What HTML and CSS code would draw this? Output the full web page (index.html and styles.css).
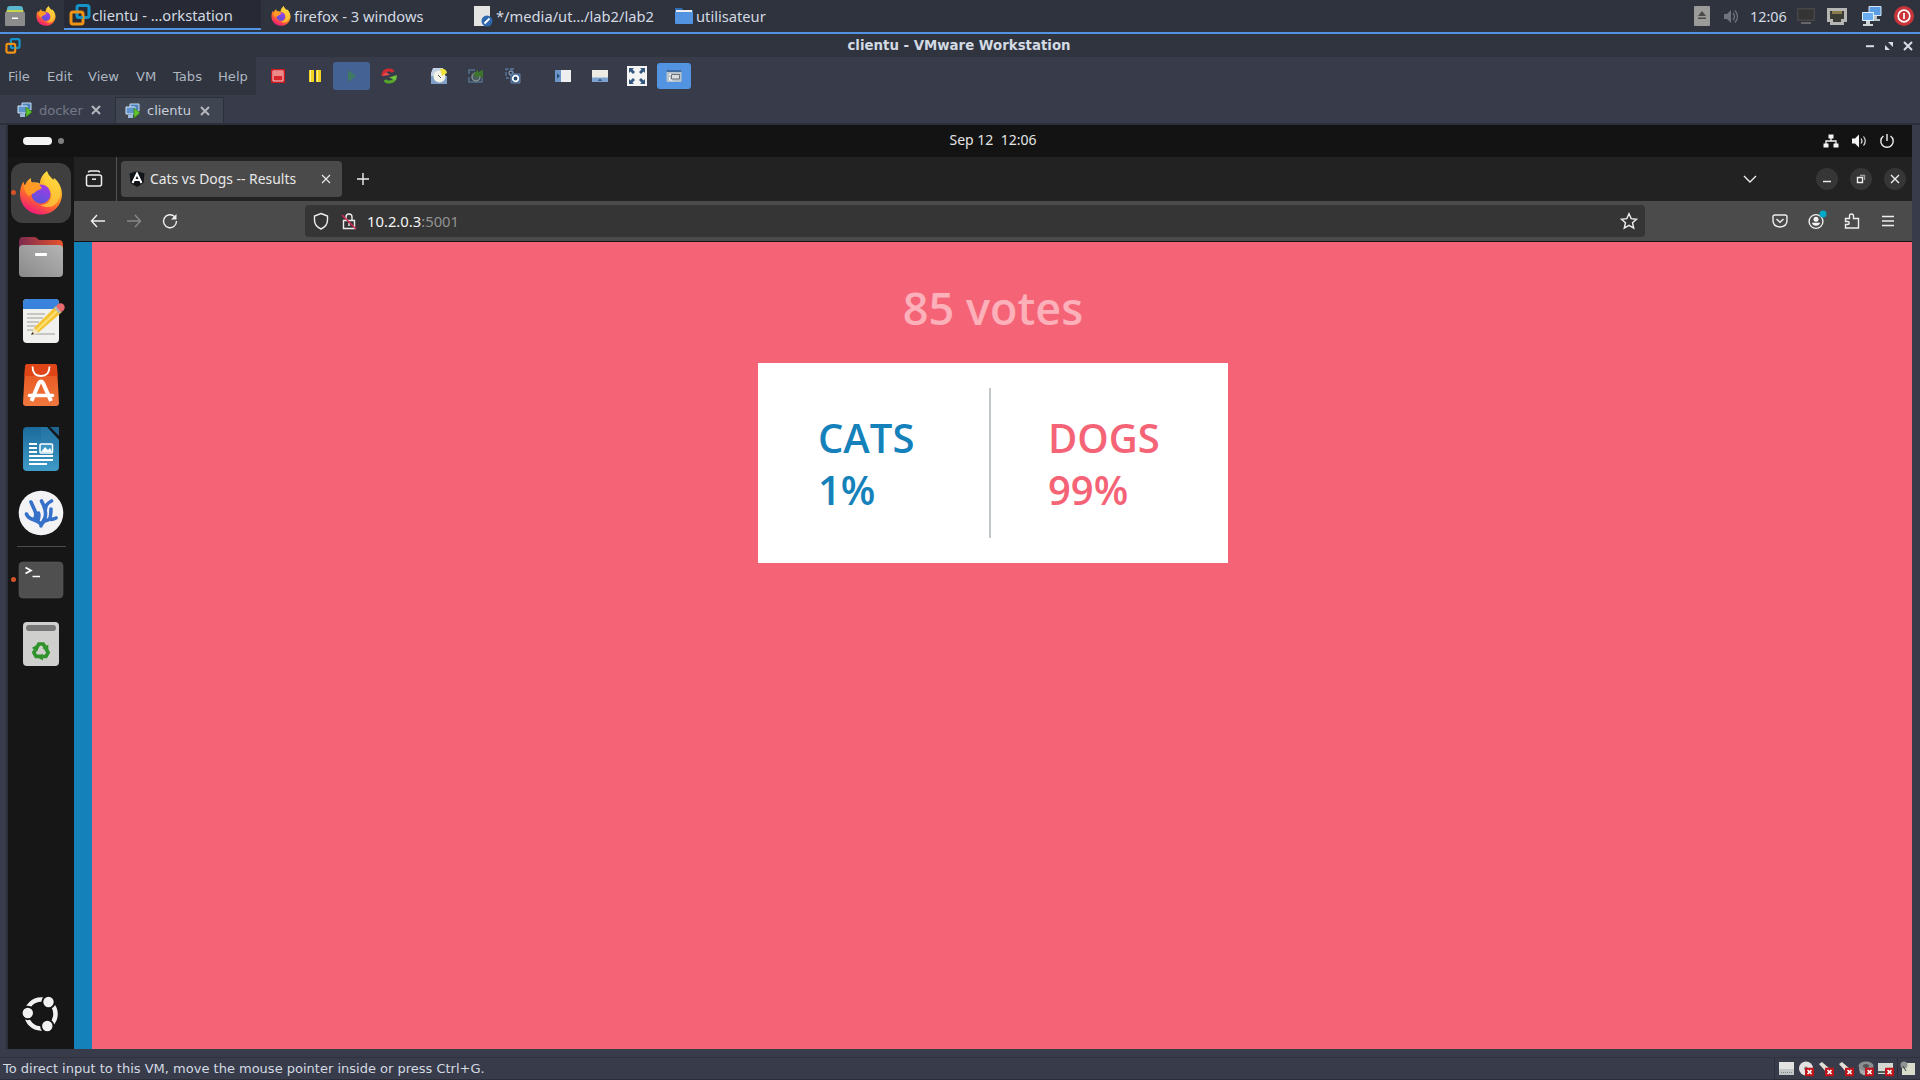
FILE: index.html
```html
<!DOCTYPE html>
<html lang="en">
<head>
<meta charset="utf-8">
<title>clientu - VMware Workstation</title>
<link rel="stylesheet" href="styles.css">
</head>
<body>
<svg class="defs" width="0" height="0" aria-hidden="true">
  <defs>
    <linearGradient id="flame" x1=".8" y1="0" x2=".3" y2="1"><stop offset="0" stop-color="#fff44f"/><stop offset=".35" stop-color="#ffb52a"/><stop offset=".65" stop-color="#ff6a2a"/><stop offset="1" stop-color="#f0147e"/></linearGradient>
    <linearGradient id="globe" x1=".7" y1="0" x2=".3" y2="1"><stop offset="0" stop-color="#a43be8"/><stop offset="1" stop-color="#5555d8"/></linearGradient>
    <linearGradient id="grey" x1="0" y1="1" x2="1" y2="0"><stop offset="0" stop-color="#8a8a8a"/><stop offset="1" stop-color="#b4b4b4"/></linearGradient>
    <linearGradient id="folderback" x1="0" x2="1"><stop offset="0" stop-color="#7b2a50"/><stop offset="1" stop-color="#e9532a"/></linearGradient>
    <linearGradient id="bag" x1="0" y1="0" x2="0" y2="1"><stop offset="0" stop-color="#e8501c"/><stop offset="1" stop-color="#f0783f"/></linearGradient>
    <linearGradient id="doc" x1="0" y1="0" x2="0" y2="1"><stop offset="0" stop-color="#1b6a9c"/><stop offset="1" stop-color="#3f9bc8"/></linearGradient>
    <symbol id="firefox" viewBox="0 0 44 44">
      <path fill="url(#flame)" d="M22 43.500C10 43.500 1 34.500 1 22.500c0-5 1.500-9 3.500-12 .3 2 .8 3 1.500 4 1-3.500 3.300-6 6-7.500-.3 2 .2 3.500 1 4.500 3-.5 5.500 0 8 1 0-5 3-9.500 7-12.500 1 4 4 6 6.500 9l.5-2c4 3 8 9 8 16 0 12-9.500 20.500-21 20.500z"/>
      <circle cx="22" cy="23" r="9.500" fill="url(#globe)"/>
      <path fill="#ff9a26" d="M5 15c4-4 10-4 15-1.500l3 3.500c-2 2-5 2-6 3.500-1.500 2-5 2-7 5-2-3-5-5-5-10.500z"/>
      <path fill="#ffd23c" d="M28 1c-4 5-5 9 0 14 4 4 6 9 3 14-2 4-6 5-10 5 12 6 20-2 20-12 0-7-3-11-6-14l-.5 3C32 8 29 5 28 1z" opacity=".75"/>
    </symbol>
    <symbol id="vmware" viewBox="0 0 22 22">
      <rect x="8" y="1.500" width="12" height="12" rx="2" fill="none" stroke="#1493c8" stroke-width="3"/>
      <rect x="2" y="8" width="12" height="12" rx="2" fill="none" stroke="#f09214" stroke-width="3"/>
      <path d="M8 10v1.500a2 2 0 0 0 2 2h4" fill="none" stroke="#1493c8" stroke-width="2.500"/>
    </symbol>
    <symbol id="vmtab" viewBox="0 0 16 16">
      <path d="M5 1h9v7H5z" fill="#4f83bd" stroke="#c4dcf2"/><path d="M1 4h9v7H1z" fill="#5e93cc" stroke="#d7e8f7"/><path d="M3 12v3h5v-4" fill="#9dbbd8"/><path d="M9 5l6 5-6 5z" fill="#62c42c" stroke="#2a7a12" stroke-width=".7"/>
    </symbol>
    <symbol id="cross" viewBox="0 0 10 10"><path d="M1 1l8 8M9 1l-8 8" fill="none" stroke="currentColor" stroke-width="2"/></symbol>
    <symbol id="off" viewBox="0 0 9 9"><rect width="9" height="9" rx="1" fill="#c11319"/><path d="M2.500 2.500l4 4M6.500 2.500l-4 4" stroke="#fff" stroke-width="1.700"/></symbol>
    <g id="arrow"><path d="M-5-2L-2.200-7H2.200L4-4" fill="none" stroke="#2f932b" stroke-width="3.600"/><path d="M7.300-6.500V-.3L1.300-2.800z" fill="#2f932b"/></g>
  </defs>
</svg>

<div class="screen">
  <header class="panel">
    <div class="launchers">
      <svg class="i20" viewBox="0 0 20 20"><path d="M2 3q0-3 3-3h10q3 0 3 3v3H2z" fill="#58b7cf"/><path d="M1.500 4h17v3h-17z" fill="#c8d54b"/><rect y="6" width="20" height="14" rx="1" fill="#8c8c8c"/><path d="M7 11.500h6v1.500H7z" fill="#fff"/></svg>
      <svg class="i20"><use href="#firefox"/></svg>
    </div>
    <nav class="windows">
      <div class="win win-active"><svg class="i22"><use href="#vmware"/></svg><span>clientu - …orkstation</span></div>
      <div class="win"><svg class="i20"><use href="#firefox"/></svg><span>firefox - 3 windows</span></div>
      <div class="win"><svg class="i20" viewBox="0 0 20 20"><path d="M1 0h16v20H1z" fill="#e4e4e2"/><circle cx="14" cy="15" r="5.500" fill="#2d68ac"/><path d="M11.500 17.500l5-5" stroke="#fff" stroke-width="2"/></svg><span>*/media/ut…/lab2/lab2</span></div>
      <div class="win win-dir"><svg class="i20" viewBox="0 0 20 20"><path d="M1 2h7l1 2h10v5H1z" fill="#2f6db5"/><path d="M2 4h16v3H2z" fill="#eee"/><path d="M1 6h18v11q0 1-1 1H2q-1 0-1-1z" fill="#5294e2"/></svg><span>utilisateur</span></div>
    </nav>
    <div class="tray">
      <svg class="tr-eject" viewBox="0 0 16 20"><rect width="16" height="20" rx="1" fill="#9b9b99"/><path d="M8 5l4 5H4zM4 11.500h8V13H4z" fill="#4a4a48"/></svg>
      <svg class="tr-vol" viewBox="0 0 15 15"><path d="M0 5h3l4-4v13l-4-4H0z" fill="#70747e"/><path d="M9 4q3 3.500 0 7M11 1.500q5 6 0 12" fill="none" stroke="#70747e" stroke-width="1.300"/></svg>
      <span class="clock">12:06</span>
      <svg class="tr-mon" viewBox="0 0 18 16"><path d="M0 0h18v13H0z" fill="#464646"/><path d="M1.500 1.500h15v10h-15z" fill="#343434"/><path d="M4 14h10v2H4z" fill="#666"/></svg>
      <svg class="tr-net" viewBox="0 0 20 17"><path d="M0 0h20v14h-3v3H3v-3H0z" fill="#b5b5b3"/><path d="M3 3h14v8h-3v3H6v-3H3z" fill="#3c3c36"/><path d="M6 3v3M8 3v3M10 3v3M12 3v3M14 3v3" stroke="#d4bd62"/></svg>
      <svg class="tr-pcs" viewBox="0 0 20 21"><path d="M7 .5h12v9H7z" fill="#5b9de2" stroke="#d6e8f7"/><path d="M11 10h4v3h3v2h-8z" fill="#b9c4c8"/><path d="M.5 6.500h11v8H.5z" fill="#6aacf0" stroke="#e0f0fc"/><path d="M4 15h4v3h3v2H1v-2h3z" fill="#cdd5d7"/></svg>
      <svg class="tr-pow" viewBox="0 0 20 20"><circle cx="10" cy="10" r="10" fill="#c9353b"/><circle cx="10" cy="10" r="5.800" fill="none" stroke="#fff" stroke-width="1.700"/><path d="M10 7v6" stroke="#fff" stroke-width="1.700"/></svg>
    </div>
  </header>

  <div class="titlebar">
    <svg class="tb-logo"><use href="#vmware"/></svg>
    <h1>clientu - VMware Workstation</h1>
    <div class="tb-ctl">
      <svg viewBox="0 0 10 10"><path d="M1 4.200h8v2H1z" fill="#d8dce5"/></svg>
      <svg viewBox="0 0 10 10"><path d="M4 1h5v5zM1 4v5h5z" fill="#d8dce5"/></svg>
      <svg viewBox="0 0 10 10"><use href="#cross"/></svg>
    </div>
  </div>

  <div class="toolbar">
    <nav class="menu"><span class="m-file">File</span><span class="m-edit">Edit</span><span class="m-view">View</span><span class="m-vm">VM</span><span class="m-tabs">Tabs</span><span class="m-help">Help</span></nav>
    <div class="tools">
      <div class="tool"><svg viewBox="0 0 16 16"><path d="M1 1h14v14H1z" fill="#cf1820"/><path d="M3 3h10v10H3z" fill="#d9262c" stroke="#f4d4d4"/><path d="M3 3h10v5H3z" fill="#ec8a8a"/></svg></div>
      <div class="tool"><svg viewBox="0 0 16 16"><path d="M2 2h5v12H2zM9 2h5v12H9z" fill="#f2d321"/><path d="M3 2h1v12H3zM10 2h1v12h-1z" fill="#fbf099"/></svg></div>
      <div class="tool tool-run"><svg viewBox="0 0 16 16"><path d="M4 2l8 6-8 6z" fill="#3f7b62"/></svg></div>
      <div class="tool"><svg viewBox="0 0 16 16"><path d="M2 8q0-6 6-6 3 0 4 2" fill="none" stroke="#d32a31" stroke-width="3"/><path d="M1 8l8-1-4-3z" fill="#e64a4f"/><path d="M14 8q0 6-6 6-3 0-4-2" fill="none" stroke="#57a62c" stroke-width="3"/><path d="M16 7L8 9.500l7 3z" fill="#6fc23b"/></svg></div>
      <div class="tool tool-sep"><svg viewBox="0 0 16 16"><path d="M2 0h10v8H0V5z" fill="#c2d2e4"/><path d="M0 8h16v8H0z" fill="#7fa0c6"/><circle cx="8.500" cy="8.500" r="6" fill="#f4f3e8"/><path d="M9 1q6-1 7 4l-5 3z" fill="#efe33d"/><path d="M7 7l3 3" stroke="#555"/></svg></div>
      <div class="tool"><svg viewBox="0 0 16 16"><path d="M1 6V2h6M1 9v5h13v-4" fill="none" stroke="#50708f" stroke-width="1.500"/><circle cx="8" cy="9" r="4" fill="#4a5962" stroke="#829392" stroke-width="1.500"/><path d="M5 6.500l5-5v3l5-3v9q-2-3-5-2v2z" fill="#3c742d"/></svg></div>
      <div class="tool"><svg viewBox="0 0 16 16"><path d="M1 8V1h8M1 10h3" fill="none" stroke="#577ba6" stroke-width="1.300" stroke-dasharray="4 1.500"/><circle cx="6" cy="5" r="2" fill="none" stroke="#7890ac" stroke-width="1.300"/><path d="M6 6h9v9H6z" fill="#2f5b90" stroke="#7e9cbf" stroke-width=".7"/><circle cx="10.500" cy="10.500" r="2.800" fill="#24466e" stroke="#fff" stroke-width="1.700"/></svg></div>
      <div class="tool tool-sep"><svg viewBox="0 0 16 16"><path d="M0 2h16v12H0z" fill="#eceeef"/><path d="M0 2h6v12H0z" fill="#6d97c8"/><path d="M2 5.500L5 8l-3 2.500z" fill="#234a7b"/></svg></div>
      <div class="tool"><svg viewBox="0 0 16 16"><path d="M0 2h16v12H0z" fill="#eeebe5"/><path d="M0 9.500h16V14H0z" fill="#7fa3cf"/><path d="M5.500 13L8 10.500l2.500 2.500z" fill="#365e91"/></svg></div>
      <div class="tool"><svg class="i20" viewBox="0 0 20 20"><path d="M0 0h20v20H0z" fill="#f4f4f4"/><path d="M2 2h5L5.500 3.500 8 6 6 8 3.500 5.500 2 7zM18 2v5l-1.500-1.500L14 8l-2-2 2.500-2.500L13 2zM2 18v-5l1.500 1.500L6 12l2 2-2.500 2.500L7 18zM18 18h-5l1.500-1.500L12 14l2-2 2.500 2.500L18 13z" fill="#35577f"/></svg></div>
      <div class="tool tool-on"><svg viewBox="0 0 16 16"><rect x=".5" y="2" width="15" height="12" rx="1" fill="#b9c3ce"/><path d="M.5 2h15v2H.5z" fill="#3e6ca3"/><path d="M3 6.500h6M3.500 9v3h3" fill="none" stroke="#fff"/><path d="M5.500 6.500h8v4.500h-8z" fill="#d9dde0" stroke="#6b7076"/></svg></div>
    </div>
  </div>

  <div class="tabs">
    <div class="tab"><svg class="i16"><use href="#vmtab"/></svg><span>docker</span><svg class="i10 tab-x"><use href="#cross"/></svg></div>
    <div class="tab tab-on"><svg class="i16"><use href="#vmtab"/></svg><span>clientu</span><svg class="i10 tab-x"><use href="#cross"/></svg></div>
  </div>

  <main class="guest">
    <div class="topbar">
      <div class="spaces"><i class="pill"></i><i class="dot"></i></div>
      <time>Sep 12&nbsp; 12:06</time>
      <div class="status-icons">
        <svg viewBox="0 0 16 16"><path d="M5.500 1.500h5v4h-5zM.5 10.500h5v4h-5zM10.500 10.500h5v4h-5z" fill="#f4f4f4"/><path d="M8 5v3M3 11V8h10v3" fill="none" stroke="#f4f4f4" stroke-width="1.300"/></svg>
        <svg viewBox="0 0 16 16"><path d="M1 5.500h3L8 1.500v13l-4-4H1z" fill="#f4f4f4"/><path d="M10 5.500q2 2.500 0 5M12.500 3.500q3.500 4.500 0 9" fill="none" stroke="#ddd" stroke-width="1.200"/></svg>
        <svg viewBox="0 0 16 16"><path d="M4.500 3a6.200 6.200 0 1 0 7 0M8 1v7" fill="none" stroke="#f0f0f0" stroke-width="1.400"/></svg>
      </div>
    </div>
    <div class="desktop">
      <aside class="dock">
        <div class="app app-focus app-live"><svg class="i44"><use href="#firefox"/></svg></div>
        <div class="app"><svg class="i48" viewBox="0 0 48 48"><path d="M2 9q0-5 4-5h11q2 0 4 2l1 1h20q4 0 4 5v12H2z" fill="url(#folderback)"/><rect x="2" y="12" width="44" height="32" rx="4" fill="url(#grey)"/><rect x="18" y="20" width="12" height="3" rx="1" fill="#fff"/></svg></div>
        <div class="app"><svg class="i48" viewBox="0 0 48 48"><rect x="6" y="2" width="36" height="44" rx="4" fill="#f0f0ef"/><path d="M6 12V6q0-4 4-4h28q4 0 4 4v6z" fill="#3a83dc"/><path d="M10 17h18M10 21h16M10 25h12M10 29h9M10 33h6M17 37h21" stroke="#b8b8b5" stroke-width="1.300"/><path d="M14 38l3-7L39 9l6 6-23 20z" fill="#f4c430"/><path d="M19 34L42 12" stroke="#fbe07a" stroke-width="2"/><path d="M14 38l3-7 5 5z" fill="#f3e4c4"/><path d="M14 38l1.500-3 1.500 2z" fill="#333"/><circle cx="43.500" cy="10.500" r="4.200" fill="#e66a6e"/><path d="M38 10l5 6" stroke="#b4b4b4" stroke-width="2.500"/></svg></div>
        <div class="app"><svg class="i48" viewBox="0 0 48 48"><path d="M8 6q0-3 3-3h26q3 0 3 3l2 36q0 3-3 3H9q-3 0-3-3z" fill="url(#bag)"/><path d="M7.500 15h33L40 6q0-3-3-3H11q-3 0-3 3z" fill="#df4517"/><path d="M15.500 5.500q0 9.500 8.500 9.500t8.500-9.500" fill="none" stroke="#fff" stroke-width="1.800"/><path d="M14.500 40l7.500-18q2-3 4 0l8 18" fill="none" stroke="#fff" stroke-width="4"/><path d="M12.500 34.500h23" stroke="#fff" stroke-width="3.500" stroke-linecap="round"/></svg></div>
        <div class="app"><svg class="i48" viewBox="0 0 48 48"><path d="M10 2h20l12 13v27q0 4-4 4H10q-4 0-4-4V6q0-4 4-4z" fill="url(#doc)"/><path d="M33 2h9v9z" fill="#1e648f"/><path d="M24 2h6l12 13v14H24z" fill="#2d80ae" opacity=".5"/><path d="M12 19h8M12 23h8M12 27h8M12 31h24M12 35h24M12 39h18" stroke="#fff" stroke-width="2"/><rect x="23" y="19" width="12.500" height="9" rx="1" fill="#3c95c4" stroke="#fff" stroke-width="1.500"/><path d="M24 27l4-5 3 3 2-2 2 4z" fill="#fff"/></svg></div>
        <div class="app"><svg class="i48" viewBox="0 0 48 48"><circle cx="24" cy="24" r="22.300" fill="#f3f3f5"/><g fill="none" stroke="#3571c8" stroke-width="3.600" stroke-linecap="round" stroke-linejoin="round"><path d="M24 37v-2q-3-3-8-4.500T9.500 25M17 30.500q3-4 1-8.500t-4-9M21.500 24q1 3-.5 7M24 35q5-5 4.500-11t-4-12M28.500 20q0-5 6-8M25 35q1-3 6-4 3-1 3-11M32 30q3 1 7-1"/></g></svg></div>
        <hr>
        <div class="app app-live"><svg class="i48" viewBox="0 0 48 48"><rect x="2" y="6" width="44" height="36" rx="4" fill="#4f4f4f" stroke="#5d5d5d" stroke-width=".6"/><path d="M8.500 11.500l5.500 3-5.500 3" fill="none" stroke="#fff" stroke-width="1.700"/><path d="M15.500 20.500H23" stroke="#fff" stroke-width="1.500"/></svg></div>
        <div class="app"><svg class="i48" viewBox="0 0 48 48"><rect x="6" y="2" width="36" height="44" rx="4" fill="#cfcfcd"/><rect x="9" y="5" width="30" height="6" rx="3" fill="#777"/><g transform="translate(24 31)"><use href="#arrow"/><use href="#arrow" transform="rotate(120)"/><use href="#arrow" transform="rotate(240)"/></g></svg></div>
        <div class="app app-grid"><svg class="i48" viewBox="0 0 48 48"><circle cx="24" cy="24" r="14.500" fill="none" stroke="#f2f2f2" stroke-width="4.500"/><g fill="#f2f2f2" stroke="#151515" stroke-width="2"><circle cx="31.500" cy="12" r="6.200"/><circle cx="10.800" cy="23" r="6.200"/><circle cx="30.300" cy="36" r="6.200"/></g></svg></div>
      </aside>
      <section class="browser">
        <div class="strip">
          <div class="view"><svg class="i20" viewBox="0 0 20 20"><path d="M4.500 3.500q0-1.500 2-1.500h7q2 0 2 1.500" fill="none" stroke="#eee" stroke-width="1.500"/><rect x="2.500" y="6" width="15" height="11" rx="2" fill="none" stroke="#eee" stroke-width="1.500"/><path d="M8 10.200h4" stroke="#eee" stroke-width="1.500"/></svg></div>
          <div class="page-tab">
            <svg class="i16" viewBox="0 0 16 16"><path class="shield" d="M8 0l7.500 2.500L14.500 12 8 16l-6.500-4L.5 2.500z"/><path d="M3.500 12L8 2.500l4.500 9.500M5.500 9h5" stroke="#fff" stroke-width="2"/></svg>
            <span>Cats vs Dogs -- Results</span>
            <svg class="i10 thin" viewBox="0 0 10 10"><path d="M1 1l8 8M9 1l-8 8"/></svg>
          </div>
          <svg class="plus" viewBox="0 0 14 14"><path d="M7 1v12M1 7h12"/></svg>
          <svg class="chev" viewBox="0 0 14 8"><path d="M1 1l6 6 6-6"/></svg>
          <div class="ctl"><svg viewBox="0 0 22 22"><path d="M7 13.500h8"/></svg><svg viewBox="0 0 22 22"><path d="M7.500 9.500h5v5h-5z"/><path d="M10 7.500h4.500v4.500" stroke="#999"/></svg><svg viewBox="0 0 22 22"><path d="M7 7l8 8M15 7l-8 8"/></svg></div>
        </div>
        <div class="navbar">
          <div class="history">
            <svg viewBox="0 0 16 16"><path d="M15 8H1.500M7 2L1.500 8 7 14"/></svg>
            <svg class="dim" viewBox="0 0 16 16"><path d="M1 8h13.500M9 2l5.500 6L9 14"/></svg>
            <svg viewBox="0 0 16 16"><path d="M12.500 3.500A6.500 6.500 0 1 0 14.500 8"/><path d="M14.500 1v5.500H9z" fill="#eee" stroke="none"/></svg>
          </div>
          <div class="url">
            <svg class="i18" viewBox="0 0 18 18"><path d="M9 1.500L15.500 4v4q0 6-6.500 9-6.500-3-6.500-9V4z"/></svg>
            <svg class="i18 lock" viewBox="0 0 18 18"><path d="M3.500 8.500h11v8h-11zM6 8V5q0-3 3-3t3 3v3M9 11v3"/><path d="M2 3l14 14" stroke="#d7264f"/></svg>
            <span>10.2.0.3<em>:5001</em></span>
            <svg class="i18 star" viewBox="0 0 18 18"><path d="M9 1.800l2.200 4.800 5.300.6-4 3.500 1.200 5.300L9 13.300 4.300 16l1.200-5.300-4-3.500 5.300-.6z"/></svg>
          </div>
          <div class="actions">
            <svg viewBox="0 0 16 16"><path d="M3 2h10q2 0 2 2v3.500q0 6-7 6.500-7-.5-7-6.500V4q0-2 2-2zM4.500 6L8 9.300 11.500 6"/></svg>
            <svg viewBox="0 0 16 16"><circle cx="8" cy="8.500" r="6.900"/><g fill="#f5f5f5" stroke="none"><circle cx="8" cy="6.300" r="2.500"/><path d="M3.800 9.800h8.400q-1 3-4.200 3t-4.200-3z"/></g><circle cx="15" cy="1" r="3.500" class="badge"/></svg>
            <svg viewBox="0 0 16 16"><path d="M1.500 5.500h4V3q0-2 2-2t2 2v2.500h5v9.500h-13v-3.500h2.200q1.500 0 1.500-1.500t-1.500-1.500H1.500z"/></svg>
            <svg viewBox="0 0 16 16"><path d="M2 3.500h12M2 8h12M2 12.500h12"/></svg>
          </div>
        </div>
        <article class="page">
          <div class="cats-bar"></div>
          <div class="results">
            <p class="total">85 votes</p>
            <div class="card">
              <div class="choice cats"><span>CATS</span><b>1%</b></div>
              <div class="choice dogs"><span>DOGS</span><b>99%</b></div>
            </div>
          </div>
        </article>
      </section>
    </div>
  </main>

  <footer class="statusbar">
    <span>To direct input to this VM, move the mouse pointer inside or press Ctrl+G.</span>
    <div class="devices">
      <svg viewBox="0 0 20 16"><path d="M2 1h15v13H2z" fill="#e2e2e0"/><path d="M2 8h15v6H2z" fill="#c3c6c7"/><path d="M4 11.500h11" stroke="#7d8a8a" stroke-dasharray="1 1"/></svg>
      <svg viewBox="0 0 20 16"><circle cx="9" cy="7.500" r="7" fill="#e3e3e3"/><circle cx="9" cy="7.500" r="2" fill="#888"/><use href="#off" x="8" y="6.500" width="9" height="9"/></svg>
      <svg viewBox="0 0 20 16"><path d="M2 3l3-2 8 7-3 4z" fill="#e5dfd7"/><use href="#off" x="8" y="6.500" width="9" height="9"/></svg>
      <svg viewBox="0 0 20 16"><path d="M2 3l3-2 8 7-3 4z" fill="#e5dfd7"/><use href="#off" x="8" y="6.500" width="9" height="9"/></svg>
      <svg viewBox="0 0 20 16"><ellipse cx="9" cy="5" rx="7.500" ry="4.500" fill="#8a8f92"/><path d="M2 7q7 5 14 0v5q-7 5-13 0z" fill="#aaa"/><ellipse cx="9" cy="5" rx="3" ry="2" fill="#555"/><use href="#off" x="8" y="6.500" width="9" height="9"/></svg>
      <svg viewBox="0 0 20 16"><path d="M1 2h15v11H1z" fill="#d4d8d2"/><path d="M1 11h15" stroke="#4f5c55" stroke-width="2"/><use href="#off" x="8" y="6.500" width="9" height="9"/></svg>
    </div>
    <svg class="note" viewBox="0 0 16 16"><path d="M4 2h11v12H2V6z" fill="#d9dccb"/><circle cx="4" cy="4" r="3.500" fill="#8e9493"/><path d="M3 5l3 5" stroke="#444"/></svg>
  </footer>
</div>
</body>
</html>
```
FILE: styles.css
```css
* { box-sizing: border-box; }
body { margin: 0; background: #383c4a; }
svg { display: block; flex: none; overflow: visible; }
.defs { position: absolute; }
.i10 { width: 10px; height: 10px; }
.i16 { width: 16px; height: 16px; }
.i18 { width: 18px; height: 18px; }
.i20 { width: 20px; height: 20px; }
.i22 { width: 22px; height: 22px; }
.i44 { width: 44px; height: 44px; }
.i48 { width: 48px; height: 48px; }

.screen { width: 1920px; height: 1080px; display: flex; flex-direction: column; overflow: hidden; background: #383c4a; color: #d3dae3; font: 13px "DejaVu Sans", sans-serif; white-space: nowrap; }

/* host panel */
.panel { height: 34px; display: flex; background: #2f333e; border-bottom: 2px solid #5294e2; font: 14.7px "Noto Sans", sans-serif; }
.launchers { width: 64px; display: flex; align-items: center; gap: 11px; padding-left: 5px; }
.windows { display: flex; gap: 5px; }
.win { width: 197px; height: 30px; display: flex; align-items: center; gap: 3px; padding: 2px 0 0 5px; }
.win-active { background: #272a34; border-bottom: 2px solid #5294e2; gap: 1px; }
.win-dir { padding-left: 4px; gap: 2px; }
.tray { margin-left: auto; display: flex; align-items: center; padding-right: 6px; }
.tr-eject { width: 16px; height: 20px; margin-right: 14px; }
.tr-vol { width: 15px; height: 15px; margin-right: 11px; }
.clock { width: 37px; margin-right: 10px; font-size: 14.4px; }
.tr-mon { width: 18px; height: 16px; margin-right: 12px; }
.tr-net { width: 20px; height: 17px; margin-right: 15px; }
.tr-pcs { width: 20px; height: 21px; margin-right: 12px; }
.tr-pow { width: 20px; height: 20px; }

/* host window chrome */
.titlebar { height: 23px; display: flex; align-items: center; justify-content: space-between; background: #2f343f; padding: 0 7px 0 5px; }
.titlebar h1 { margin: 0 0 1px; font: bold 13.33px "DejaVu Sans", sans-serif; }
.tb-logo { width: 16px; height: 16px; margin-right: 32px; }
.tb-ctl { display: flex; gap: 9px; color: #d8dce5; }
.tb-ctl svg { width: 10px; height: 10px; }
.toolbar { height: 38px; display: flex; }
.menu { width: 256px; display: flex; align-items: center; background: #2f343f; padding-left: 8px; color: #aeb6c2; font-size: 13.1px; }
.m-file { width: 39px; }
.m-edit { width: 41px; }
.m-view { width: 48px; }
.m-vm { width: 37px; }
.m-tabs { width: 45px; }
.tools { display: flex; align-items: center; padding-left: 3px; }
.tool { width: 37px; height: 28px; display: flex; align-items: center; justify-content: center; border-radius: 3px; }
.tool svg { width: 16px; height: 16px; }
.tool svg.i20 { width: 20px; height: 20px; }
.tool-sep { margin-left: 13px; }
.tool-run { background: #446394; }
.tool-on { width: 34px; height: 26px; margin-left: 2px; background: #5294e2; }
.tabs { height: 30px; display: flex; padding-top: 2px; border-bottom: 2px solid #2c2f3a; }
.tab { width: 115px; display: flex; align-items: center; padding: 0 14px 0 17px; color: #747986; }
.tab span { margin-left: 6px; }
.tab-on { width: 109px; padding: 0 13px 0 9px; background: #404552; border: 1px solid #2c303b; border-bottom: 0; color: #c8cfda; }
.tab-x { margin-left: auto; color: #b4b8bd; }

/* guest display */
.guest { height: 924px; margin: 0 8px; display: flex; flex-direction: column; box-shadow: -2px 0 0 #2c2f3a; }
.topbar { height: 32px; display: grid; grid-template-columns: 1fr auto 1fr; align-items: center; background: #131313; color: #e4e4e4; font: 14px "Noto Sans", sans-serif; }
.topbar time { padding: 0 0 3px 66px; }
.spaces { display: flex; align-items: center; gap: 6px; padding-left: 15px; }
.pill { width: 29px; height: 8px; border-radius: 4px; background: #f4f4f4; }
.dot { width: 6px; height: 6px; border-radius: 3px; background: #808080; }
.status-icons { display: flex; justify-content: flex-end; gap: 12px; padding-right: 17px; }
.status-icons svg { width: 16px; height: 16px; }
.desktop { flex: 1; display: flex; }
.dock { width: 66px; display: flex; flex-direction: column; align-items: center; background: #161616; padding-top: 6px; }
.app { position: relative; width: 60px; height: 60px; margin-bottom: 4px; display: flex; align-items: center; justify-content: center; border-radius: 12px; }
.app-focus { background: #3f3f3f; }
.app-live::before { content: ""; position: absolute; left: 0; top: 27px; width: 5px; height: 5px; border-radius: 50%; background: #d4532a; }
.dock hr { width: 49px; height: 1px; margin: -1px 0 3px; border: 0; background: #4b4b4b; }
.app-grid { margin-top: auto; margin-bottom: 5px; }

/* browser */
.browser { flex: 1; display: flex; flex-direction: column; font: 14px "Noto Sans", sans-serif; }
.strip { height: 44px; display: flex; align-items: center; background: #222; color: #e8e8e8; padding-right: 6px; }
.strip path { fill: none; }
.view { width: 43px; height: 44px; display: flex; align-items: center; padding-left: 10px; border-right: 1px solid #555; }
.page-tab { width: 221px; height: 36px; margin-left: 4px; display: flex; align-items: center; padding: 0 11px 0 8px; border-radius: 4px; background: #4a4a4a; }
.strip .shield { fill: #111418; }
.page-tab span { margin: 0 auto 1px 5px; font-size: 13.9px; }
.thin, .plus, .chev, .ctl { fill: none; stroke: #eee; stroke-width: 1.4; }
.thin { stroke-width: 1.1; }
.plus { width: 14px; height: 14px; margin-left: 14px; }
.chev { width: 14px; height: 8px; margin-left: auto; margin-right: 59px; }
.ctl { display: flex; gap: 12px; }
.ctl svg { width: 22px; height: 22px; border-radius: 50%; background: #363636; }
.navbar { height: 41px; display: flex; align-items: center; background: #4b4b4b; border-bottom: 1px solid #141414; fill: none; stroke: #eee; stroke-width: 1.4; }
.history { width: 231px; display: flex; gap: 20px; padding-left: 16px; }
.history svg { width: 16px; height: 16px; }
.history .dim { stroke: #888; }
.url { width: 1340px; height: 32px; display: flex; align-items: center; padding: 0 7px; border-radius: 4px; background: #353535; color: #f4f4f4; }
.url span { margin-bottom: 1px; font-size: 14.8px; }
.url em { font-style: normal; color: #929292; }
.lock { margin: 0 9px 0 10px; }
.star { margin-left: auto; }
.actions { margin-left: auto; display: flex; gap: 20px; padding-right: 16px; }
.actions svg { width: 16px; height: 16px; }
.badge { fill: #00a8c8; stroke: none; }

/* results page */
.page { flex: 1; display: flex; background: #f56476; font-family: "Open Sans", sans-serif; font-weight: 600; }
.cats-bar { width: 18px; background: #1581ba; }
.results { flex: 1; display: flex; flex-direction: column; align-items: center; padding-right: 18px; }
.total { margin: 35px 0 25px; font-size: 45px; line-height: 61px; color: #fcb0b9; }
.card { width: 470px; height: 200px; display: flex; align-items: center; background: #fff; }
.choice { height: 150px; display: flex; flex-direction: column; justify-content: center; padding-top: 2px; font-size: 40px; line-height: 52px; }
.choice b { font-weight: 600; }
.cats { width: 233px; padding-left: 60px; border-right: 2px solid #c2c7ca; color: #1581ba; }
.dogs { padding-left: 57px; color: #f56476; }

/* host status bar */
.statusbar { height: 23px; margin-top: 8px; display: flex; align-items: center; padding: 0 4px 0 3px; border-top: 1px solid #2f323e; border-bottom: 1px solid #2b2e38; }
.devices { margin-left: auto; height: 22px; display: flex; align-items: center; border-left: 1px solid #2c2f3a; border-right: 1px solid #2c2f3a; padding-left: 2px; }
.devices svg { width: 20px; height: 16px; }
.note { width: 16px; height: 16px; margin-left: 2px; }
```
